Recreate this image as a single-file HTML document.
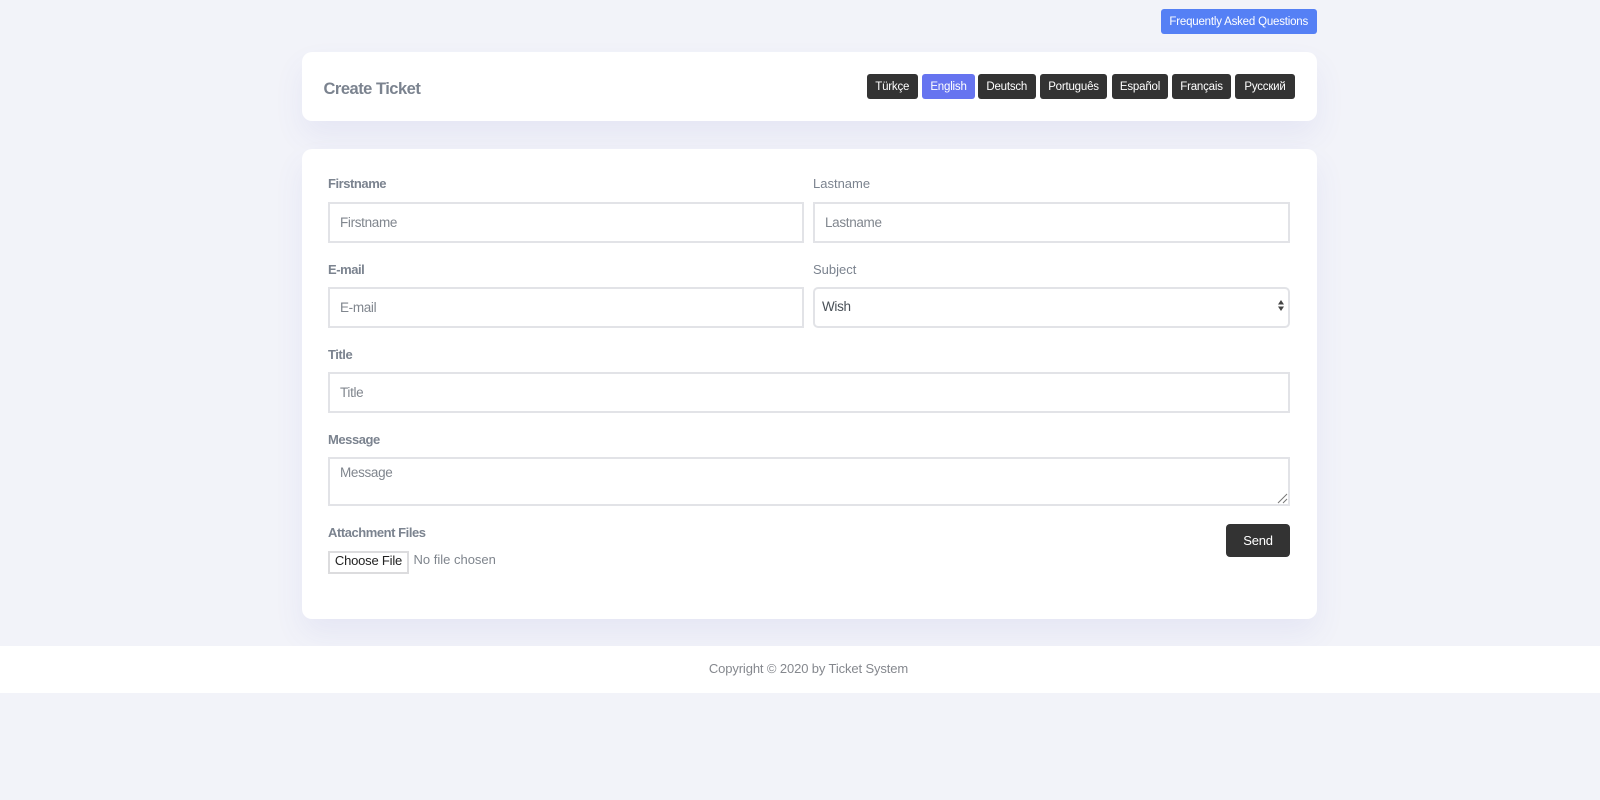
<!DOCTYPE html>
<html><head><meta charset="utf-8"><title>Create Ticket</title>
<style>
*{box-sizing:border-box}
html,body{margin:0;padding:0}
body{width:1600px;height:800px;background:#f2f3f9;position:relative;overflow:hidden;font-family:"Liberation Sans",sans-serif;}
#w{position:absolute;left:0;top:0;width:1600px;height:800px;filter:blur(.3px)}
.a{position:absolute;white-space:nowrap}
.card{position:absolute;background:#fff;border-radius:10px;left:302px;width:1014.5px;box-shadow:0 15px 30px rgba(90,90,190,.08)}
.btn{position:absolute;border-radius:3px;background:#333;color:#fff;font-size:11.5px;letter-spacing:-.2px;text-align:center;top:74px;height:25px;line-height:27px;white-space:nowrap}
.lab{position:absolute;white-space:nowrap;font-size:13px;color:#7b838f;font-weight:bold;letter-spacing:-.45px;line-height:16px}
.lab.n{font-weight:normal;letter-spacing:0}
.in{position:absolute;background:#fff;border:2px solid #e2e3e7;font-size:13.5px;letter-spacing:-.33px;color:#80868e;padding-left:10px;white-space:nowrap}
</style></head><body><div id="w">
<div class="btn" style="left:1161px;top:9px;width:155.5px;height:25px;background:#5580f5;line-height:26px">Frequently Asked Questions</div>
<div class="card" style="top:52px;height:69px"></div>
<div class="a" style="left:323.5px;top:78px;font-size:16.5px;line-height:22px;font-weight:bold;color:#7b838f;letter-spacing:-.5px">Create Ticket</div>
<div class="btn" style="left:867px;width:50.5px">Türkçe</div>
<div class="btn" style="left:922px;width:53px;background:#6674f0">English</div>
<div class="btn" style="left:978px;width:57.5px">Deutsch</div>
<div class="btn" style="left:1040px;width:67px">Português</div>
<div class="btn" style="left:1112px;width:56px">Español</div>
<div class="btn" style="left:1172px;width:59px">Français</div>
<div class="btn" style="left:1235px;width:60px">Русский</div>

<div class="card" style="top:149px;height:470px"></div>
<div class="lab" style="left:328px;top:176px">Firstname</div>
<div class="lab n" style="left:813px;top:176px">Lastname</div>
<div class="in" style="left:328px;top:202px;width:476px;height:41px;line-height:37px">Firstname</div>
<div class="in" style="left:813px;top:202px;width:477px;height:41px;line-height:37px">Lastname</div>
<div class="lab" style="left:328px;top:262px">E-mail</div>
<div class="lab n" style="left:813px;top:262px">Subject</div>
<div class="in" style="left:328px;top:287px;width:476px;height:41px;line-height:37px">E-mail</div>
<div class="in" style="left:813px;top:287px;width:477px;height:41px;line-height:36px;border-radius:5px;color:#495057;padding-left:7px">Wish
<svg style="position:absolute;right:3px;top:10px" width="8" height="13" viewBox="0 0 8 13"><path d="M4 1L7 5.5H1Z M4 12L1 7.5H7Z" fill="#444"/></svg></div>
<div class="lab" style="left:328px;top:347px">Title</div>
<div class="in" style="left:328px;top:372px;width:962px;height:41px;line-height:37px">Title</div>
<div class="lab" style="left:328px;top:432px">Message</div>
<div class="in" style="left:328px;top:457px;width:962px;height:49px;line-height:27px">Message
<svg style="position:absolute;right:0;bottom:0" width="11" height="11" viewBox="0 0 11 11"><path d="M1 10L10 1M6 10L10 6" stroke="#777" stroke-width="1" fill="none"/></svg></div>
<div class="lab" style="left:328px;top:525px">Attachment Files</div>
<div class="a" style="left:328px;top:551px;width:81px;height:23px;border:2px solid #dcdcde;background:#fff;color:#222;font-size:13px;letter-spacing:-.2px;line-height:15px;text-align:center">Choose File</div>
<div class="a" style="left:413.5px;top:550px;font-size:13px;line-height:20px;color:#7f858d">No file chosen</div>
<div class="btn" style="left:1226px;top:524px;width:64px;height:33px;line-height:33px;font-size:13px;letter-spacing:-.2px;border-radius:4px">Send</div>

<div class="a" style="left:0;top:646px;width:1600px;height:47px;background:#fff;text-align:center;font-size:13px;letter-spacing:-.12px;line-height:45px;color:#85888e;padding-left:17px">Copyright © 2020 by Ticket System</div>
</div></body></html>
